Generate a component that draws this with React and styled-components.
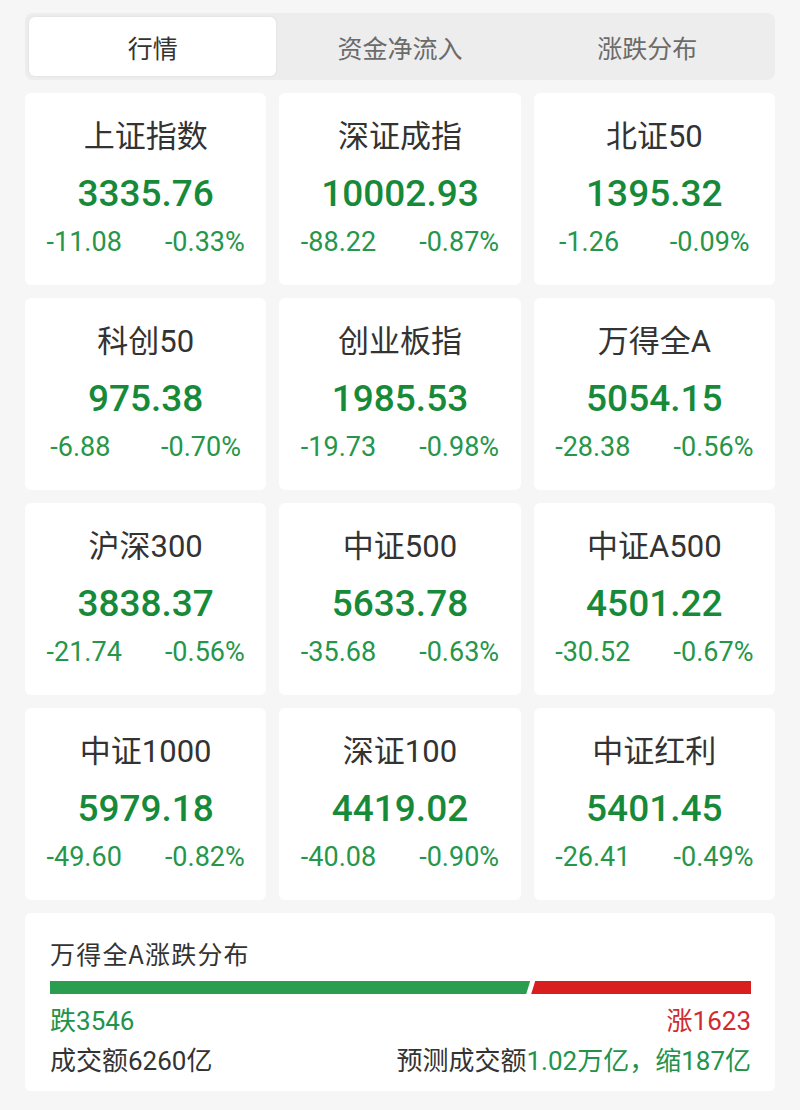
import React from "react";
import styled, { createGlobalStyle } from "styled-components";

const font = `"Roboto", "Noto Sans CJK SC", "Noto Sans", sans-serif`;
const cjk = `"Noto Sans CJK SC", "Roboto", sans-serif`;

const GlobalStyle = createGlobalStyle`
  body {
    margin: 0;
    background: #f6f6f6;
    font-family: ${font};
  }
`;

const Page = styled.div`
  width: 800px;
  height: 1110px;
  box-sizing: border-box;
  padding: 13px 25px 0;
  background: #f6f6f6;
`;

const TabBar = styled.div`
  display: grid;
  grid-template-columns: repeat(3, 1fr);
  height: 67px;
  box-sizing: border-box;
  padding: 4px;
  border-radius: 8px;
  background: #ededed;
`;

const Tab = styled.div`
  display: flex;
  align-items: center;
  justify-content: center;
  border-radius: 6px;
  font-family: ${cjk};
  font-size: 25px;
  color: ${(p) => (p.$active ? "#333333" : "#6b6b6b")};
  background: ${(p) => (p.$active ? "#ffffff" : "transparent")};
  box-shadow: ${(p) => (p.$active ? "0 0 3px rgba(0, 0, 0, 0.08)" : "none")};
`;

const Grid = styled.div`
  display: grid;
  grid-template-columns: repeat(3, 1fr);
  grid-auto-rows: 192px;
  gap: 13px 13px;
  margin-top: 13px;
`;

const Card = styled.div`
  display: flex;
  flex-direction: column;
  align-items: center;
  box-sizing: border-box;
  padding-top: 24px;
  border-radius: 6px;
  background: #ffffff;
`;

const Name = styled.div`
  font-size: 31px;
  line-height: 40px;
  color: #333333;
`;

const Value = styled.div`
  margin-top: 15px;
  font-size: 37px;
  font-weight: 500;
  line-height: 44px;
  color: #178a3a;
`;

const Changes = styled.div`
  display: flex;
  justify-content: space-around;
  align-self: stretch;
  margin-top: 9px;
  font-size: 27px;
  line-height: 34px;
  color: #26964a;
`;

const Summary = styled.div`
  height: 178px;
  box-sizing: border-box;
  margin-top: 13px;
  padding: 23px 24px 0 25px;
  border-radius: 6px;
  background: #ffffff;
`;

const SummaryTitle = styled.div`
  font-family: ${cjk};
  font-size: 25px;
  letter-spacing: 1.2px;
  line-height: 34px;
  color: #333333;
`;

const Bar = styled.div`
  display: flex;
  gap: 1px;
  height: 13px;
  margin-top: 11px;
`;

const BarPart = styled.div`
  background: ${(p) => p.$color};
  clip-path: ${(p) =>
    p.$left
      ? "polygon(0 0, 100% 0, calc(100% - 4px) 100%, 0 100%)"
      : "polygon(4px 0, 100% 0, 100% 100%, 0 100%)"};
`;

const Row = styled.div`
  display: flex;
  justify-content: space-between;
  margin-top: ${(p) => p.$gap}px;
  font-size: 26px;
  line-height: 30px;
  color: #333333;
`;

const Tone = styled.span`
  color: ${(p) => (p.$up ? "#d02b30" : "#21934a")};
`;

const indices = [
  ["上证指数", "3335.76", "-11.08", "-0.33%"],
  ["深证成指", "10002.93", "-88.22", "-0.87%"],
  ["北证50", "1395.32", "-1.26", "-0.09%"],
  ["科创50", "975.38", "-6.88", "-0.70%"],
  ["创业板指", "1985.53", "-19.73", "-0.98%"],
  ["万得全A", "5054.15", "-28.38", "-0.56%"],
  ["沪深300", "3838.37", "-21.74", "-0.56%"],
  ["中证500", "5633.78", "-35.68", "-0.63%"],
  ["中证A500", "4501.22", "-30.52", "-0.67%"],
  ["中证1000", "5979.18", "-49.60", "-0.82%"],
  ["深证100", "4419.02", "-40.08", "-0.90%"],
  ["中证红利", "5401.45", "-26.41", "-0.49%"],
];

const fall = 3546;
const rise = 1623;

export default function App() {
  return (
    <Page>
      <GlobalStyle />
      <TabBar>
        <Tab $active>行情</Tab>
        <Tab>资金净流入</Tab>
        <Tab>涨跌分布</Tab>
      </TabBar>

      <Grid>
        {indices.map(([name, value, diff, pct]) => (
          <Card key={name}>
            <Name>{name}</Name>
            <Value>{value}</Value>
            <Changes>
              <span>{diff}</span>
              <span>{pct}</span>
            </Changes>
          </Card>
        ))}
      </Grid>

      <Summary>
        <SummaryTitle>万得全A涨跌分布</SummaryTitle>
        <Bar>
          <BarPart $left $color="#2a9d50" style={{ flex: fall }} />
          <BarPart $color="#d81e1e" style={{ flex: rise }} />
        </Bar>
        <Row $gap={12}>
          <Tone>跌{fall}</Tone>
          <Tone $up>涨{rise}</Tone>
        </Row>
        <Row $gap={10}>
          <span>成交额6260亿</span>
          <span>
            预测成交额<Tone>1.02万亿，缩187亿</Tone>
          </span>
        </Row>
      </Summary>
    </Page>
  );
}
